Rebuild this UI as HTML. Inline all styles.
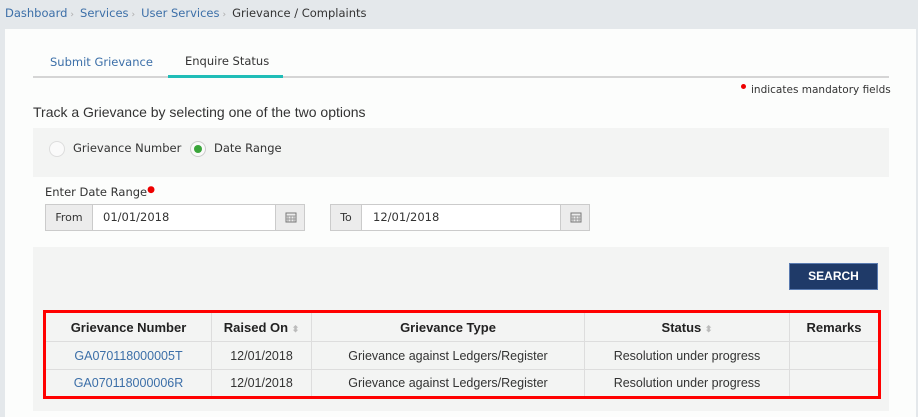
<!DOCTYPE html>
<html><head><meta charset="utf-8"><style>
*{box-sizing:border-box;margin:0;padding:0}
body{width:918px;height:417px;background:#e4e8eb;position:relative;overflow:hidden;font-family:"DejaVu Sans","Liberation Sans",sans-serif;font-size:11px;color:#333}
.a{position:absolute}
.bc{left:5px;top:6px;color:#3c6fa8;font-size:11.5px;white-space:nowrap}
.bc .s{color:#aaa;font-size:9px;margin:0 6px 0 3px}
.bc .c{color:#333}
.panel{left:5px;top:29px;width:911px;height:388px;background:#fcfdfc}
.tabs{left:33px;top:76px;width:856px;height:2px;background:#d5d5d5}
.tabact{left:168px;top:75px;width:115px;height:3px;background:#1fbdb7}
.grey{background:#f3f4f3}
.box{border:1px solid #cbcbcb;height:27px;top:204px;background:#fff}
.lab{background:#ececec;border-right:1px solid #cbcbcb;height:25px;line-height:25px;text-align:center;position:absolute;top:0}
.ico{background:#ececec;border-left:1px solid #cbcbcb;height:25px;position:absolute;top:0;right:0;width:29px}
.val{position:absolute;top:0;line-height:25px;font-size:11.5px;color:#333}
.radio{width:16px;height:16px;border-radius:50%;border:1px solid #ddd;background:#fafafa}
table{border-collapse:collapse;position:absolute;left:43px;top:310px;width:838px;border:3px solid #f00;background:#f3f4f3}
td,th{border:1px solid #ddd;text-align:center;height:28px;font-family:"Liberation Sans",sans-serif;font-size:12.5px}
th{height:30px;font-weight:bold;color:#222;font-size:13px}
td span,th span{display:inline-block;white-space:nowrap}
.lk{color:#3c6fa8}
.sort{color:#bbb;font-size:9px;font-style:normal}
</style></head><body>
<div class="a bc">Dashboard<span class="s">›</span>Services<span class="s">›</span>User Services<span class="s">›</span><span class="c">Grievance / Complaints</span></div>
<div class="a panel"></div>
<div class="a" style="left:50px;top:55px;color:#3c6fa8;font-size:11.5px">Submit Grievance</div>
<div class="a" style="left:185px;top:54px;color:#333;font-size:11.5px">Enquire Status</div>
<div class="a tabs"></div><div class="a tabact"></div>
<div class="a" style="left:741px;top:84px;font-size:10.5px;color:#333"><span style="display:inline-block;width:5px;height:5px;border-radius:50%;background:#e00;vertical-align:4px;margin-right:5px"></span>indicates mandatory fields</div>
<div class="a" style="left:33px;top:104px;font-family:'Liberation Sans',sans-serif;font-size:14px;color:#333">Track a Grievance by selecting one of the two options</div>
<div class="a grey" style="left:33px;top:128px;width:856px;height:49px"></div>
<div class="a radio" style="left:49px;top:141px"></div>
<div class="a" style="left:73px;top:141px;font-size:11.5px">Grievance Number</div>
<div class="a radio" style="left:190px;top:141px;border-color:#ccc"><div style="width:8px;height:8px;border-radius:50%;background:#3aa53a;margin:3px"></div></div>
<div class="a" style="left:214px;top:141px;font-size:11.5px">Date Range</div>
<div class="a" style="left:45px;top:185px;font-size:11.5px">Enter Date Range<span style="color:#e00;font-size:9px;vertical-align:4px">●</span></div>
<div class="a box" style="left:45px;width:260px"><div class="lab" style="left:0;width:47px">From</div><div class="val" style="left:57px">01/01/2018</div><div class="ico"><svg width="29" height="25"><rect x="10" y="8" width="10" height="9" fill="none" stroke="#777"/><path d="M10 11h10M12 11v6M15 11v6M18 11v6M10 14h10" stroke="#999"/></svg></div></div>
<div class="a box" style="left:330px;width:260px"><div class="lab" style="left:0;width:31px">To</div><div class="val" style="left:42px">12/01/2018</div><div class="ico"><svg width="29" height="25"><rect x="10" y="8" width="10" height="9" fill="none" stroke="#777"/><path d="M10 11h10M12 11v6M15 11v6M18 11v6M10 14h10" stroke="#999"/></svg></div></div>
<div class="a grey" style="left:33px;top:247px;width:856px;height:164px"></div>
<div class="a" style="left:789px;top:263px;width:89px;height:27px;background:#1f3a68;border:1px solid #5a7bb0;color:#fff;text-align:center;line-height:25px;font-family:'Liberation Sans',sans-serif;font-size:12px;font-weight:bold">SEARCH</div>
<table>
<tr><th style="width:167px"><span>Grievance Number</span></th><th style="width:100px"><span>Raised On <i class="sort">⬍</i></span></th><th style="width:273px"><span>Grievance Type</span></th><th style="width:205px"><span>Status <i class="sort">⬍</i></span></th><th><span>Remarks</span></th></tr>
<tr><td class="lk"><span>GA070118000005T</span></td><td><span>12/01/2018</span></td><td><span>Grievance against Ledgers/Register</span></td><td><span>Resolution under progress</span></td><td></td></tr>
<tr><td class="lk"><span>GA070118000006R</span></td><td><span>12/01/2018</span></td><td><span>Grievance against Ledgers/Register</span></td><td><span>Resolution under progress</span></td><td></td></tr>
</table>
</body></html>
